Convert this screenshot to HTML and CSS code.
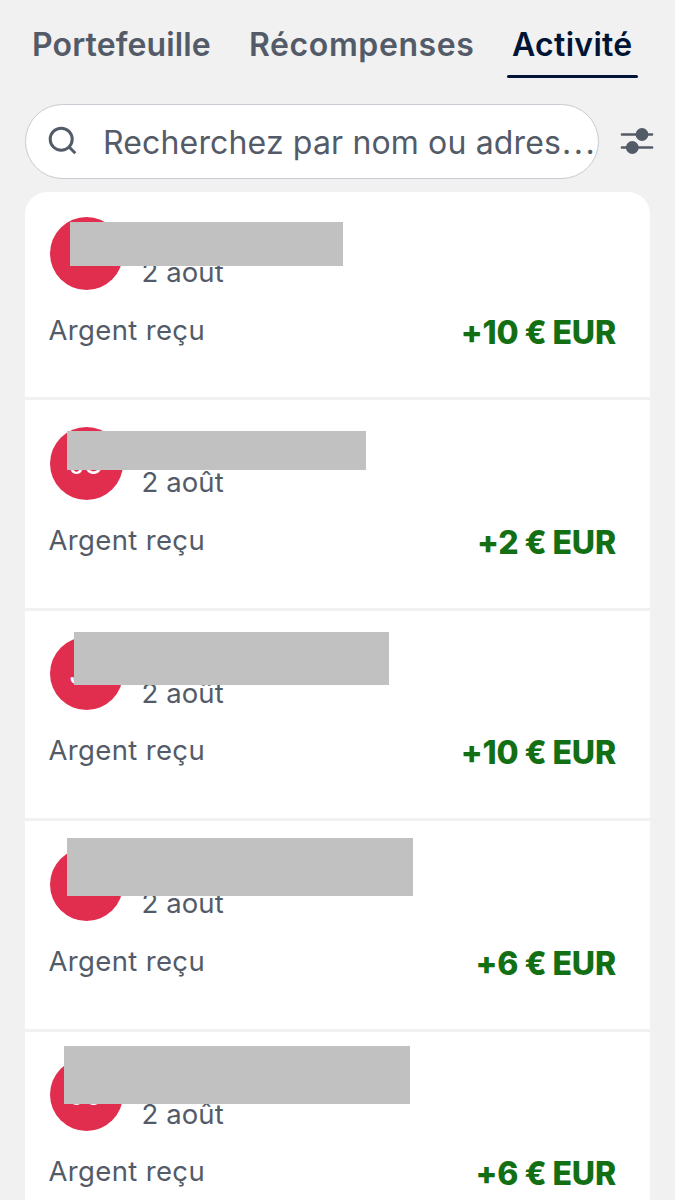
FILE: index.html
```html
<!DOCTYPE html>
<html lang="fr">
<head>
    <meta charset="UTF-8">
    <meta name="viewport" content="width=device-width, initial-scale=1.0">
    <title>Activité</title>
    <link rel="stylesheet" href="styles.css">
</head>
<body>

    <nav class="tabs">
        <a class="tab wallet">Portefeuille</a>
        <a class="tab rewards">Récompenses</a>
        <a class="tab active">Activité</a>
    </nav>

    <div class="search-row">
        <div class="search-box">
            <svg class="search-icon" width="30" height="30" viewBox="0 0 30 30" fill="none" stroke="#545b68" stroke-width="3">
                <circle cx="13.2" cy="13.2" r="11"/>
                <path d="M20.8 20.8 L27.3 27.2"/>
            </svg>
            <span class="placeholder">Recherchez par nom ou adres<span class="dots">...</span></span>
        </div>
        <svg class="filter-icon" width="34" height="28" viewBox="0 0 34 28" fill="#545b68" stroke="#545b68" stroke-width="2.7" stroke-linecap="round">
            <path d="M2 7.5 H32 M2 20.5 H32"/>
            <circle cx="22" cy="7.5" r="5.4" stroke-width="2"/>
            <circle cx="12.3" cy="20.5" r="5.4" stroke-width="2"/>
        </svg>
    </div>

    <main class="card">
        <section class="item">
            <div class="top">
                <div class="avatar"></div>
                <span class="date">2 août</span>
            </div>
            <div class="bottom">
                <span class="label">Argent reçu</span>
                <span class="amount">+10 € EUR</span>
            </div>
            <div class="mask mask-1"></div>
        </section>
        <section class="item">
            <div class="top">
                <div class="avatar">JO</div>
                <span class="date">2 août</span>
            </div>
            <div class="bottom">
                <span class="label">Argent reçu</span>
                <span class="amount">+2 € EUR</span>
            </div>
            <div class="mask mask-2"></div>
        </section>
        <section class="item">
            <div class="top">
                <div class="avatar">JO</div>
                <span class="date">2 août</span>
            </div>
            <div class="bottom">
                <span class="label">Argent reçu</span>
                <span class="amount">+10 € EUR</span>
            </div>
            <div class="mask mask-3"></div>
        </section>
        <section class="item">
            <div class="top">
                <div class="avatar"></div>
                <span class="date">2 août</span>
            </div>
            <div class="bottom">
                <span class="label">Argent reçu</span>
                <span class="amount">+6 € EUR</span>
            </div>
            <div class="mask mask-4"></div>
        </section>
        <section class="item">
            <div class="top">
                <div class="avatar">JO</div>
                <span class="date">2 août</span>
            </div>
            <div class="bottom">
                <span class="label">Argent reçu</span>
                <span class="amount">+6 € EUR</span>
            </div>
            <div class="mask mask-5"></div>
        </section>
    </main>

</body>
</html>
```
FILE: styles.css
```css
* {
    box-sizing: border-box;
}
body {
    margin: 0;
    height: 1200px;
    overflow: hidden;
    font-family: Inter, "Liberation Sans", sans-serif;
    background-color: #f1f1f1;
    color: #545b68;
}

/* tabs */
.tabs {
    display: flex;
    height: 78px;
    padding: 24px 0 0 32px;
}
.tab {
    height: 54px;
    font-size: 32px;
    line-height: 41px;
    font-weight: 600;
    white-space: nowrap;
}
.wallet {
    width: 217px;
    letter-spacing: 0.12px;
}
.rewards {
    width: 258px;
    letter-spacing: 0.6px;
}
.active {
    width: 131px;
    padding-left: 5px;
    letter-spacing: 0.3px;
    color: #001435;
}
.active::after {
    content: "";
    display: block;
    height: 3px;
    margin: 10px 0 0 -5px;
    border-radius: 2px;
    background-color: #001435;
}

/* search */
.search-row {
    display: flex;
    align-items: center;
    gap: 21px;
    height: 75px;
    margin-top: 26px;
    padding-left: 25px;
}
.search-box {
    display: flex;
    align-items: center;
    width: 574px;
    height: 75px;
    padding-left: 22px;
    border: 1.5px solid #c9cbd2;
    border-radius: 38px;
    background-color: white;
}
.search-icon {
    flex: none;
    margin-bottom: 1px;
}
.filter-icon {
    margin-bottom: 2px;
}
.placeholder {
    margin: 2px 0 0 25px;
    font-size: 32px;
    line-height: 40px;
    font-weight: 440;
    letter-spacing: 0.15px;
    white-space: nowrap;
}
.dots {
    margin-left: 1px;
    letter-spacing: 2.5px;
}

/* activity list */
.card {
    width: 625px;
    margin: 13px 0 0 25px;
    border-radius: 22px 22px 0 0;
    background-color: white;
}
.item {
    position: relative;
    height: 210.5px;
    padding: 26.5px 34px 0 25px;
    border-bottom: 3px solid #f1f1f1;
}
.item:first-child {
    height: 208.1px;
    padding-top: 24.5px;
}
.top {
    display: flex;
    height: 73px;
}
.avatar {
    width: 73px;
    height: 73px;
    border-radius: 50%;
    background-color: #e12e4e;
    color: white;
    font-size: 25px;
    font-weight: 500;
    line-height: 76px;
    text-align: center;
}
.date {
    margin: 38.5px 0 0 18.5px;
    font-size: 27.5px;
    line-height: 34px;
    font-weight: 420;
    letter-spacing: 0.1px;
}
.bottom {
    display: flex;
    justify-content: space-between;
    margin-top: 22px;
}
.label {
    margin-left: -1.5px;
    font-size: 27.5px;
    line-height: 37.5px;
    font-weight: 420;
    letter-spacing: 0.35px;
}
.amount {
    color: #136f13;
    font-size: 32px;
    line-height: 42px;
    font-weight: 800;
    letter-spacing: -0.15px;
    word-spacing: -0.8px;
}

/* grey blocks over the names */
.mask {
    position: absolute;
    background-color: #c1c1c1;
}
.mask-1 {
    left: 45px;
    top: 30px;
    width: 273px;
    height: 44px;
}
.mask-2 {
    left: 42px;
    top: 31px;
    width: 299px;
    height: 39px;
}
.mask-3 {
    left: 49px;
    top: 21px;
    width: 315px;
    height: 53px;
}
.mask-4 {
    left: 42px;
    top: 17px;
    width: 346px;
    height: 58px;
}
.mask-5 {
    left: 39px;
    top: 14px;
    width: 346px;
    height: 58px;
}
```
